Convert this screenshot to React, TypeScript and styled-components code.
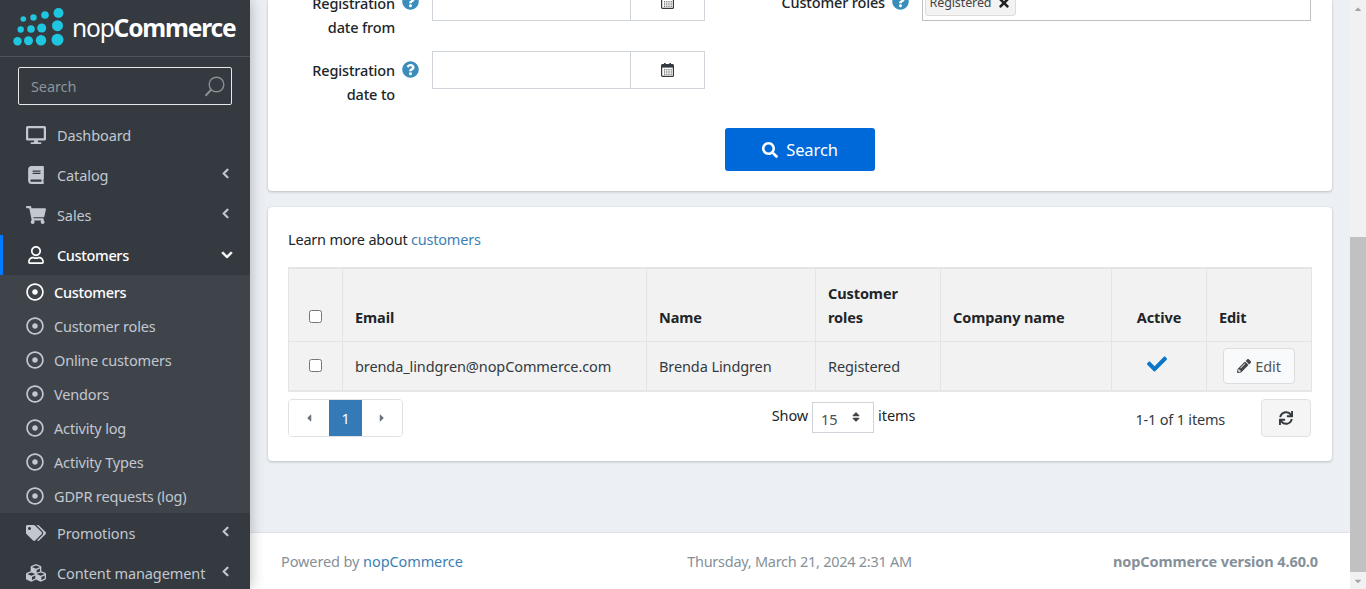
import React from "react";
import styled, { createGlobalStyle } from "styled-components";
import {
  FaDesktop, FaBook, FaShoppingCart, FaRegUser, FaTags, FaCubes, FaChevronLeft, FaChevronDown,
  FaRegDotCircle, FaQuestionCircle, FaSearch, FaCheck, FaPencilAlt, FaSync,
  FaCaretLeft, FaCaretRight, FaCaretUp, FaCaretDown, FaTimes, FaSort,
} from "react-icons/fa";

const font = `"Noto Sans", "Liberation Sans", sans-serif`;

const Global = createGlobalStyle`
  html, body { margin: 0; padding: 0; height: 100%; overflow: hidden; }
  #root { height: 589px; }
  * { box-sizing: border-box; }
  body { font-family: ${font}; font-size: 14.5px; color: #212529; letter-spacing: -0.1px; }
`;

const Page = styled.div`
  display: flex; width: 1366px; height: 589px; overflow: hidden; background: #ecf0f5;
`;
const Sidebar = styled.aside`
  width: 250px; flex: none; height: 589px; overflow: hidden; background: #343a40;
  box-shadow: 0 0 14px rgba(0,0,0,.28); position: relative; z-index: 2;
`;
const Brand = styled.div`
  height: 57px; display: flex; align-items: center; padding: 0 0 2px 12px; gap: 6px;
  border-bottom: 1px solid #4b545c;
`;
const BrandText = styled.span`
  font-size: 24.5px; color: #fff; font-weight: 400; letter-spacing: -1.15px; b { font-weight: 700; }
`;
const SideSearch = styled.div`
  margin: 10px 18px 10px; height: 38px; border: 1px solid #e6e8ea; border-radius: 2px;
  display: flex; align-items: center; justify-content: space-between; padding: 0 6px 0 12px;
  color: #8d939a; font-size: 14.5px;
`;
const Item = styled.div<{ $open?: boolean }>`
  height: 40px; display: flex; align-items: center; position: relative; padding-left: 24px;
  color: ${(p) => (p.$open ? "#fff" : "#c2c7d0")};
  font-size: 14.5px; font-weight: ${(p) => (p.$open ? 500 : 400)};
  letter-spacing: ${(p) => (p.$open ? "-0.35px" : "-0.1px")};
  ${(p) => p.$open && "box-shadow: inset 3px 0 0 #007bff;"}
`;
const ItemIcon = styled.span`
  width: 23px; display: flex; justify-content: center; margin-right: 10px; font-size: 20px;
`;
const Chevron = styled.span<{ $down?: boolean }>`
  position: absolute; display: flex;
  right: ${(p) => (p.$down ? 17 : 19)}px;
  top: ${(p) => (p.$down ? 14 : 13)}px;
  font-size: ${(p) => (p.$down ? 12 : 11)}px;
  svg { stroke: currentColor; stroke-width: 30px; }
`;
const Sub = styled.div`
  background: #3f444b;
`;
const SubItem = styled.div<{ $active?: boolean }>`
  height: 34px; display: flex; align-items: center; padding-left: 26px; gap: 10px;
  font-size: 14.5px; color: ${(p) => (p.$active ? "#fff" : "#c2c7d0")};
  font-weight: ${(p) => (p.$active ? 500 : 400)};
  letter-spacing: ${(p) => (p.$active ? "-0.3px" : "-0.17px")};
  svg { font-size: 18px; }
`;
const Main = styled.main`
  flex: 1; min-width: 0; display: flex; flex-direction: column; height: 589px; overflow: hidden;
`;
const Content = styled.div`
  flex: 1; padding: 0 18px; min-height: 0;
`;
const Card = styled.section`
  background: #fff; border-radius: 4px; box-shadow: 0 0 1px rgba(0,0,0,.13), 0 1px 3px rgba(0,0,0,.2);
`;
const SearchCard = styled(Card)`
  height: 191px; margin-bottom: 16px; border-radius: 0 0 4px 4px;
  display: flex; flex-direction: column; overflow: hidden;
`;
const FormGrid = styled.div`
  display: grid; grid-template-columns: 437px 1fr; margin-top: -17px; height: 122px;
`;
const FormCol = styled.div`
  display: flex; flex-direction: column; gap: 13px;
`;
const Field = styled.div`
  display: flex; align-items: flex-start; height: 38px;
`;
const DateField = styled(Field)`
  height: 55px;
`;
const Label = styled.div<{ $w: number; $top?: number }>`
  width: ${(p) => p.$w}px; flex: none; text-align: right; font-weight: 500; line-height: 24px;
  font-size: 14.5px; color: #212529; padding-top: ${(p) => p.$top ?? 7}px; letter-spacing: -0.15px;
`;
const Help = styled.span`
  width: 37px; flex: none; color: #3c8dbc; font-size: 17px; padding: 10px 0 0 7px; display: flex;
  align-items: flex-start; height: 30px;
`;
const DateBox = styled.div`
  width: 273px; height: 38px; display: flex; border: 1px solid #ced4da; background: #fff; flex: none;
`;
const DateInput = styled.div`
  flex: 1; border-right: 1px solid #ced4da;
`;
const DateBtn = styled.div`
  width: 73px; display: flex; align-items: center; justify-content: center;
`;
const Multi = styled.div`
  width: 389px; height: 38px; border: 1px solid #c0c0c0; padding: 1px 2px; display: flex; align-items: flex-start;
`;
const Tag = styled.span`
  height: 31px; width: 91px; background: #f3f3f3; border: 1px solid #dcdcdc; border-radius: 3px; padding-top: 4px;
  display: flex; align-items: center; justify-content: center; gap: 6px; font-size: 12.5px; color: #444;
  svg { color: #222; font-size: 14px; }
`;
const ButtonRow = styled.div`
  display: flex; justify-content: center; padding-left: 0; margin-top: 23px;
`;
const PrimaryButton = styled.div`
  width: 150px; height: 43px; background: #0069d9; color: #fff; border-radius: 3px;
  display: flex; align-items: center; justify-content: center; gap: 8px; font-size: 16.5px;
`;
const ListCard = styled(Card)`
  height: 254px; padding: 20px 20px 0;
`;
const Learn = styled.div`
  line-height: 24px; height: 40px; letter-spacing: -0.2px;
`;
const Link = styled.a`
  color: #3d7fb5;
`;
const Table = styled.table`
  width: 1023px; table-layout: fixed; border-collapse: collapse; background: #f2f2f2;
  border-top: 2px solid #e4e4e4; border-bottom: 2px solid #e6e6e6; border-left: 1px solid #e4e4e4; border-right: 1px solid #e4e4e4;
`;
const Th = styled.th<{ $center?: boolean }>`
  height: 73px; vertical-align: bottom; text-align: ${(p) => (p.$center ? "center" : "left")};
  padding: 12px; font-weight: 700; line-height: 24px; border: 1px solid #e4e4e4;
  font-size: 14.5px; color: #212529;
`;
const Td = styled.td<{ $center?: boolean }>`
  height: 49px; padding: 0 12px; border: 1px solid #e4e4e4; line-height: 24px; color: #343a40;
  text-align: ${(p) => (p.$center ? "center" : "left")};
`;
const Box = styled.span`
  display: block; width: 13px; height: 13px; margin: 0 auto; border: 1px solid #767676; border-radius: 2.5px; background: #fff;
`;
const HeadBox = styled(Box)`
  margin-bottom: 6px;
`;
const Check = styled.span`
  color: #0b76c9; font-size: 20px; display: inline-flex; position: relative; top: 1px; left: -2px;
`;
const EditBtn = styled.div`
  width: 72px; height: 36px; margin-left: 4px; background: #f9fafb; border: 1px solid #ddd; border-radius: 4px;
  display: flex; align-items: center; justify-content: center; gap: 4px; color: #555;
  svg { color: #444; font-size: 14px; }
`;
const Pager = styled.div`
  display: grid; grid-template-columns: 1fr auto 1fr; align-items: start; margin-top: 7px; height: 38px;
`;
const Pages = styled.div`
  display: flex; width: 115px; height: 38px; border: 1px solid #dee2e6; border-radius: 4px; overflow: hidden; background: #fff;
`;
const PageBtn = styled.span<{ $active?: boolean; $w: number }>`
  width: ${(p) => p.$w}px; display: flex; align-items: center; justify-content: center; flex: none;
  background: ${(p) => (p.$active ? "#337ab7" : "#fff")}; color: ${(p) => (p.$active ? "#fff" : "#6c757d")};
  font-size: ${(p) => (p.$active ? 14.5 : 12)}px;
`;
const ShowWrap = styled.div`
  display: flex; align-items: flex-start; gap: 4px; margin-left: 87px; padding-top: 3px; line-height: 26px;
`;
const Select = styled.div`
  width: 62px; height: 31px; border: 1px solid #ced4da; display: flex; align-items: center; justify-content: space-between;
  padding: 3px 11px 0 8px; color: #495057; svg { font-size: 12px; margin-top: -3px; color:#444; }
`;
const Right = styled.div`
  display: flex; justify-content: flex-end; align-items: center; height: 38px; gap: 36px; margin-right: 1px;
`;
const Refresh = styled.div`
  width: 50px; height: 38px; background: #f5f5f5; border: 1px solid #dee2e6; border-radius: 4px;
  display: flex; align-items: center; justify-content: center; color: #343a40; font-size: 14px;
`;
const Count = styled.span`
  color: #343a40; padding-top: 2px; letter-spacing: -0.2px;
`;
const Footer = styled.footer`
  height: 57px; flex: none; background: #fff; border-top: 1px solid #dee2e6;
  display: grid; grid-template-columns: 1fr auto 1fr; align-items: center; padding: 0 32px 1px 31px; color: #869099;
`;
const DateText = styled.span`
  letter-spacing: -0.27px;
`;
const Version = styled.b`
  text-align: right; font-weight: 700;
`;
const Scrollbar = styled.div`
  width: 16px; flex: none; height: 589px; background: #f1f1f1; display: flex; flex-direction: column; align-items: center;
  color: #505050; font-size: 10px;
`;
const ScrollBtn = styled.div<{ $h: number }>`
  height: ${(p) => p.$h}px; width: 100%; display: flex; align-items: center; justify-content: center; flex: none;
  color: #a3a3a3;
`;
const ScrollTrack = styled.div`
  flex: 1; width: 100%; padding: 220px 0 0;
`;
const ScrollThumb = styled.div`
  height: 335px; width: 100%; background: #c1c1c1;
`;

const Logo = () => (
  <svg width="54" height="38" viewBox="12 9 54 38" style={{ flex: "none" }}>
    {[
      [23.3, 20, 2.8], [33.5, 18.5, 3.2], [45, 16, 3.8], [58.5, 14, 5],
      [20.7, 30.5, 3.2], [31, 30, 3.8], [41.7, 29, 4.5], [57.5, 26.7, 5.5],
      [17.5, 42.3, 4.2], [28.5, 41.7, 4.5], [41, 41.3, 5.2], [57.5, 40.7, 6],
    ].map(([x, y, r], i) => <circle key={i} cx={x} cy={y} r={r} fill="#1fc6e0" />)}
  </svg>
);

const Magnifier = () => (
  <svg width="21" height="22" viewBox="0 0 21 22" fill="none" stroke="#8a8f94" strokeWidth="1.4">
    <circle cx="12.5" cy="9.5" r="7.3" />
    <path d="M7.2 14.8 1.5 20.8" strokeWidth="2" />
  </svg>
);

const CalendarIcon = () => (
  <svg width="13" height="14" viewBox="0 0 13 14">
    <path d="M3 0h1.6v2H3zM8.4 0H10v2H8.4z" fill="#343a40" />
    <rect x=".6" y="1.6" width="11.8" height="11.8" rx="1" fill="none" stroke="#343a40" strokeWidth="1.2" />
    <rect x=".6" y="1.6" width="11.8" height="3" fill="#343a40" />
    {[6.2, 8.4, 10.6].flatMap((y) => [3, 5.2, 7.4, 9.6].map((x) => (
      <rect key={`${x}-${y}`} x={x} y={y} width="1.2" height="1.2" fill="#555" />
    )))}
  </svg>
);

const nav = ["Customers", "Customer roles", "Online customers", "Vendors", "Activity log", "Activity Types", "GDPR requests (log)"];

export default function App() {
  return (
    <Page>
      <Global />
      <Sidebar>
        <Brand>
          <Logo />
          <BrandText>nop<b>Commerce</b></BrandText>
        </Brand>
        <SideSearch>Search<Magnifier /></SideSearch>
        <Item><ItemIcon><FaDesktop /></ItemIcon>Dashboard</Item>
        <Item><ItemIcon><FaBook size={18} /></ItemIcon>Catalog<Chevron><FaChevronLeft /></Chevron></Item>
        <Item><ItemIcon><FaShoppingCart /></ItemIcon>Sales<Chevron><FaChevronLeft /></Chevron></Item>
        <Item $open><ItemIcon><FaRegUser size={18} /></ItemIcon>Customers<Chevron $down><FaChevronDown /></Chevron></Item>
        <Sub>
          {nav.map((n, i) => (
            <SubItem key={n} $active={i === 0}><FaRegDotCircle />{n}</SubItem>
          ))}
        </Sub>
        <Item><ItemIcon><FaTags /></ItemIcon>Promotions<Chevron><FaChevronLeft /></Chevron></Item>
        <Item><ItemIcon><FaCubes /></ItemIcon>Content management<Chevron><FaChevronLeft /></Chevron></Item>
      </Sidebar>
      <Main>
        <Content>
          <SearchCard>
            <FormGrid>
              <FormCol>
                <DateField>
                  <Label $w={127} $top={8}>Registration<br />date from</Label>
                  <Help><FaQuestionCircle /></Help>
                  <DateBox><DateInput /><DateBtn><CalendarIcon /></DateBtn></DateBox>
                </DateField>
                <DateField>
                  <Label $w={127}>Registration<br />date to</Label>
                  <Help><FaQuestionCircle /></Help>
                  <DateBox><DateInput /><DateBtn><CalendarIcon /></DateBtn></DateBox>
                </DateField>
              </FormCol>
              <FormCol>
                <Field>
                  <Label $w={180}>Customer roles</Label>
                  <Help><FaQuestionCircle /></Help>
                  <Multi><Tag>Registered <FaTimes /></Tag></Multi>
                </Field>
              </FormCol>
            </FormGrid>
            <ButtonRow>
              <PrimaryButton><FaSearch size={16} />Search</PrimaryButton>
            </ButtonRow>
          </SearchCard>
          <ListCard>
            <Learn>Learn more about <Link>customers</Link></Learn>
            <Table>
              <colgroup>
                <col width="54" /><col width="304" /><col width="169" /><col width="125" /><col width="171" /><col width="95" /><col width="105" />
              </colgroup>
              <thead>
                <tr>
                  <Th $center><HeadBox /></Th>
                  <Th>Email</Th>
                  <Th>Name</Th>
                  <Th>Customer roles</Th>
                  <Th>Company name</Th>
                  <Th $center>Active</Th>
                  <Th>Edit</Th>
                </tr>
              </thead>
              <tbody>
                <tr>
                  <Td $center><Box /></Td>
                  <Td>brenda_lindgren@nopCommerce.com</Td>
                  <Td>Brenda Lindgren</Td>
                  <Td>Registered</Td>
                  <Td />
                  <Td $center><Check><FaCheck /></Check></Td>
                  <Td><EditBtn><FaPencilAlt />Edit</EditBtn></Td>
                </tr>
              </tbody>
            </Table>
            <Pager>
              <Pages>
                <PageBtn $w={40}><FaCaretLeft /></PageBtn>
                <PageBtn $w={33} $active>1</PageBtn>
                <PageBtn $w={40}><FaCaretRight /></PageBtn>
              </Pages>
              <ShowWrap>Show <Select>15<FaSort /></Select> items</ShowWrap>
              <Right>
                <Count>1-1 of 1 items</Count>
                <Refresh><FaSync /></Refresh>
              </Right>
            </Pager>
          </ListCard>
        </Content>
        <Footer>
          <span>Powered by <Link>nopCommerce</Link></span>
          <DateText>Thursday, March 21, 2024 2:31 AM</DateText>
          <Version>nopCommerce version 4.60.0</Version>
        </Footer>
      </Main>
      <Scrollbar>
        <ScrollBtn $h={17}><FaCaretUp /></ScrollBtn>
        <ScrollTrack><ScrollThumb /></ScrollTrack>
        <ScrollBtn $h={17}><FaCaretDown /></ScrollBtn>
      </Scrollbar>
    </Page>
  );
}
